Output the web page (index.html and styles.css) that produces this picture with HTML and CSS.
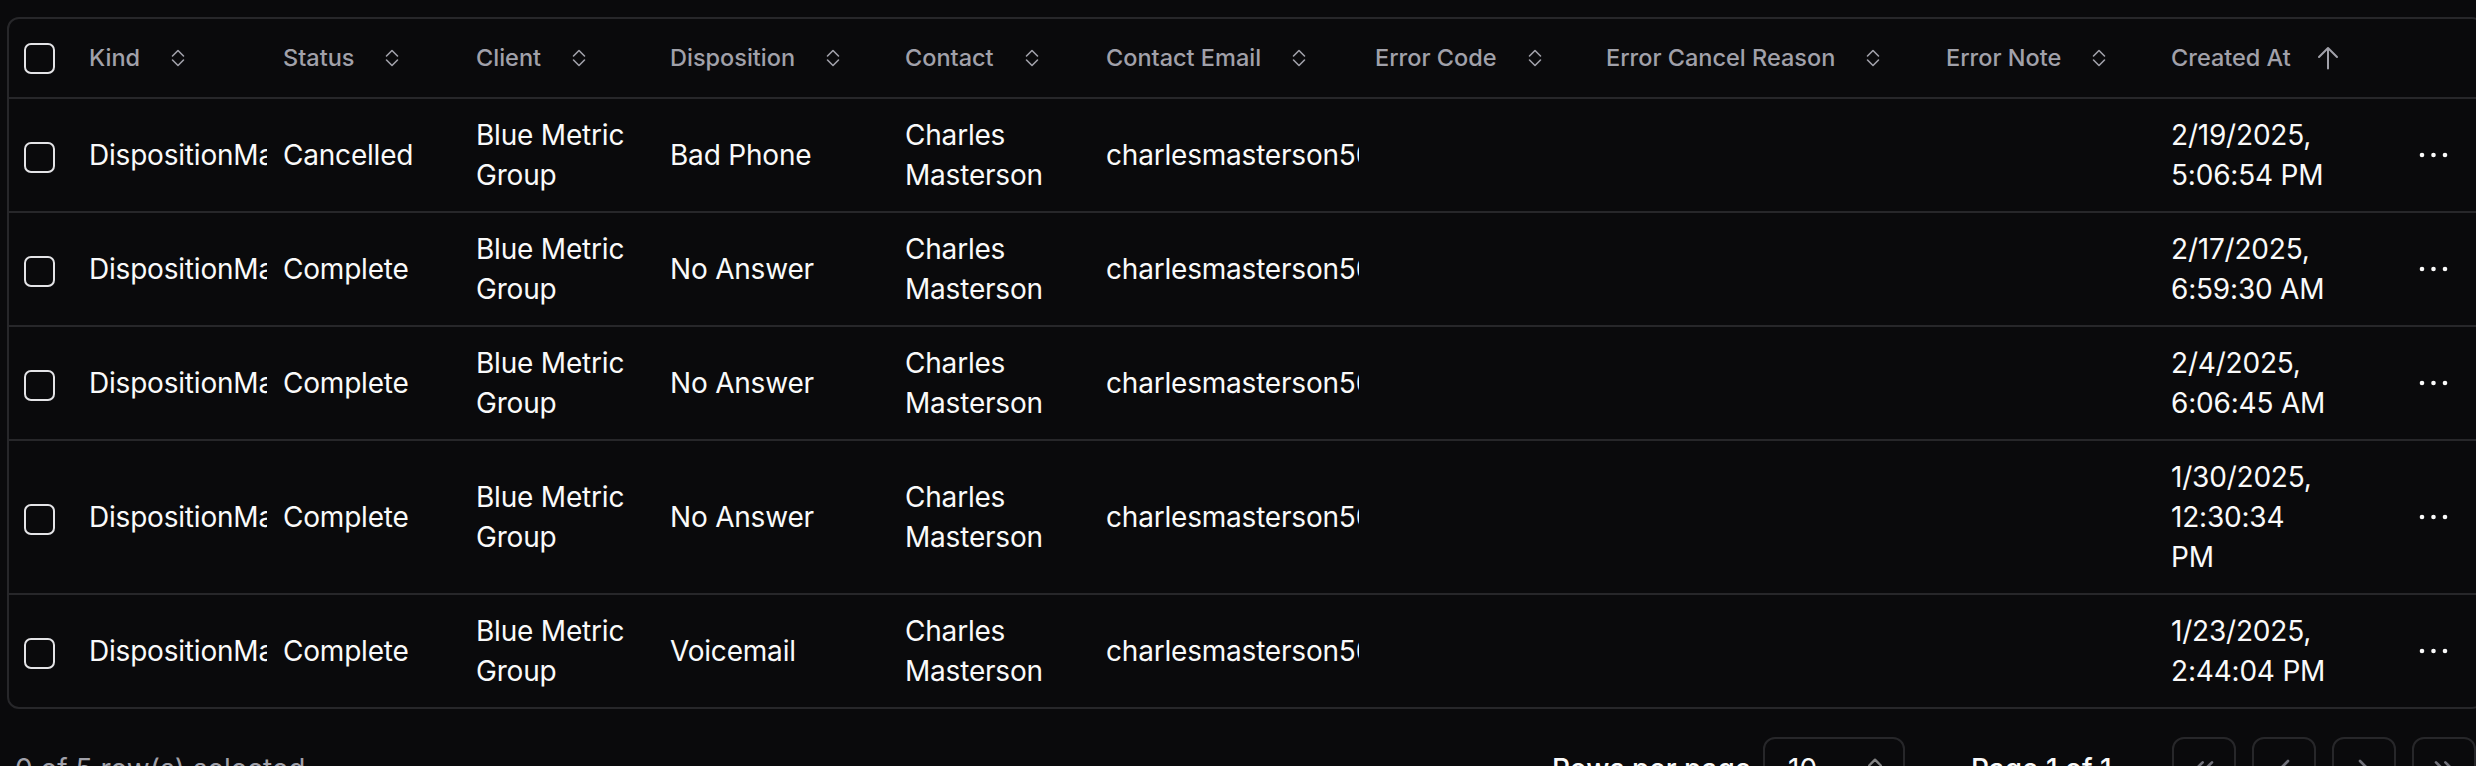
FILE: index.html
```html
<!DOCTYPE html>
<html lang="en">
<head>
<meta charset="utf-8">
<title>Dispositions</title>
<link rel="stylesheet" href="styles.css">
</head>
<body>
<svg class="defs" aria-hidden="true">
  <symbol id="i-sort" viewBox="0 0 14 18"><path d="M1.5 7 7 1.5 12.5 7M1.5 11 7 16.5 12.5 11" fill="none" stroke="currentColor" stroke-width="1.6" stroke-linecap="round" stroke-linejoin="round"/></symbol>
  <symbol id="i-up" viewBox="0 0 22 24"><path d="M11 22.5V2M2 11l9-9 9 9" fill="none" stroke="currentColor" stroke-width="2" stroke-linecap="round" stroke-linejoin="round"/></symbol>
  <symbol id="i-dots" viewBox="0 0 30 6"><circle cx="3" cy="3" r="2.3" fill="currentColor"/><circle cx="14.5" cy="3" r="2.3" fill="currentColor"/><circle cx="26" cy="3" r="2.3" fill="currentColor"/></symbol>
  <symbol id="i-first" viewBox="0 0 24 24"><path d="m11 17-5-5 5-5M18 17l-5-5 5-5" fill="none" stroke="currentColor" stroke-width="2" stroke-linecap="round" stroke-linejoin="round"/></symbol>
  <symbol id="i-prev" viewBox="0 0 24 24"><path d="m15 18-6-6 6-6" fill="none" stroke="currentColor" stroke-width="2" stroke-linecap="round" stroke-linejoin="round"/></symbol>
  <symbol id="i-next" viewBox="0 0 24 24"><path d="m9 18 6-6-6-6" fill="none" stroke="currentColor" stroke-width="2" stroke-linecap="round" stroke-linejoin="round"/></symbol>
  <symbol id="i-last" viewBox="0 0 24 24"><path d="m6 17 5-5-5-5M13 17l5-5-5-5" fill="none" stroke="currentColor" stroke-width="2" stroke-linecap="round" stroke-linejoin="round"/></symbol>
  <symbol id="i-updown" viewBox="0 0 24 24"><path d="m7 15 5 5 5-5M7 9l5-5 5 5" fill="none" stroke="currentColor" stroke-width="2" stroke-linecap="round" stroke-linejoin="round"/></symbol>
</svg>
<div class="page">
  <div class="card">
    <table class="grid">
      <colgroup>
        <col class="c-select"><col class="c-kind"><col class="c-status"><col class="c-client"><col class="c-disp"><col class="c-contact"><col class="c-email"><col class="c-code"><col class="c-reason"><col class="c-note"><col class="c-created"><col class="c-actions">
      </colgroup>
      <thead>
        <tr>
          <th class="select"><span class="checkbox"></span></th>
          <th><span class="head">Kind<svg class="sort"><use href="#i-sort"/></svg></span></th>
          <th><span class="head">Status<svg class="sort"><use href="#i-sort"/></svg></span></th>
          <th><span class="head">Client<svg class="sort"><use href="#i-sort"/></svg></span></th>
          <th><span class="head">Disposition<svg class="sort"><use href="#i-sort"/></svg></span></th>
          <th><span class="head">Contact<svg class="sort"><use href="#i-sort"/></svg></span></th>
          <th><span class="head">Contact Email<svg class="sort"><use href="#i-sort"/></svg></span></th>
          <th><span class="head">Error Code<svg class="sort"><use href="#i-sort"/></svg></span></th>
          <th><span class="head">Error Cancel Reason<svg class="sort"><use href="#i-sort"/></svg></span></th>
          <th><span class="head">Error Note<svg class="sort"><use href="#i-sort"/></svg></span></th>
          <th><span class="head">Created At<svg class="arrow"><use href="#i-up"/></svg></span></th>
          <th></th>
        </tr>
      </thead>
      <tbody>
        <tr>
          <td class="select"><span class="checkbox row-box"></span></td>
          <td class="clip">DispositionManual</td>
          <td>Cancelled</td>
          <td>Blue Metric Group</td>
          <td>Bad Phone</td>
          <td>Charles Masterson</td>
          <td class="clip">charlesmasterson50@gmail.com</td>
          <td></td><td></td><td></td>
          <td>2/19/2025, 5:06:54 PM</td>
          <td class="actions"><span class="row-action"><svg class="dots"><use href="#i-dots"/></svg></span></td>
        </tr>
        <tr>
          <td class="select"><span class="checkbox row-box"></span></td>
          <td class="clip">DispositionManual</td>
          <td>Complete</td>
          <td>Blue Metric Group</td>
          <td>No Answer</td>
          <td>Charles Masterson</td>
          <td class="clip">charlesmasterson50@gmail.com</td>
          <td></td><td></td><td></td>
          <td>2/17/2025, 6:59:30 AM</td>
          <td class="actions"><span class="row-action"><svg class="dots"><use href="#i-dots"/></svg></span></td>
        </tr>
        <tr>
          <td class="select"><span class="checkbox row-box"></span></td>
          <td class="clip">DispositionManual</td>
          <td>Complete</td>
          <td>Blue Metric Group</td>
          <td>No Answer</td>
          <td>Charles Masterson</td>
          <td class="clip">charlesmasterson50@gmail.com</td>
          <td></td><td></td><td></td>
          <td>2/4/2025, 6:06:45 AM</td>
          <td class="actions"><span class="row-action"><svg class="dots"><use href="#i-dots"/></svg></span></td>
        </tr>
        <tr>
          <td class="select"><span class="checkbox row-box"></span></td>
          <td class="clip">DispositionManual</td>
          <td>Complete</td>
          <td>Blue Metric Group</td>
          <td>No Answer</td>
          <td>Charles Masterson</td>
          <td class="clip">charlesmasterson50@gmail.com</td>
          <td></td><td></td><td></td>
          <td>1/30/2025, 12:30:34 PM</td>
          <td class="actions"><span class="row-action"><svg class="dots"><use href="#i-dots"/></svg></span></td>
        </tr>
        <tr class="last">
          <td class="select"><span class="checkbox row-box"></span></td>
          <td class="clip">DispositionManual</td>
          <td>Complete</td>
          <td>Blue Metric Group</td>
          <td>Voicemail</td>
          <td>Charles Masterson</td>
          <td class="clip">charlesmasterson50@gmail.com</td>
          <td></td><td></td><td></td>
          <td>1/23/2025, 2:44:04 PM</td>
          <td class="actions"><span class="row-action"><svg class="dots"><use href="#i-dots"/></svg></span></td>
        </tr>
      </tbody>
    </table>
  </div>
  <div class="footer">
    <div class="selected">0 of 5 row(s) selected.</div>
    <div class="controls">
      <div class="rows-label">Rows per page</div>
      <div class="select-box"><span>10</span><svg class="updown"><use href="#i-updown"/></svg></div>
      <div class="page-info">Page 1 of 1</div>
      <div class="pager">
        <span class="pbtn"><svg><use href="#i-first"/></svg></span>
        <span class="pbtn"><svg><use href="#i-prev"/></svg></span>
        <span class="pbtn"><svg><use href="#i-next"/></svg></span>
        <span class="pbtn"><svg><use href="#i-last"/></svg></span>
      </div>
    </div>
  </div>
</div>
</body>
</html>
```

FILE: styles.css
```css
html, body {
  margin: 0;
  background: #0a0a0c;
  overflow: hidden;
}
body {
  font-family: Inter, "Liberation Sans", sans-serif;
  color: #fafafa;
}
.defs {
  position: absolute;
  width: 0;
  height: 0;
  overflow: hidden;
}
.page {
  padding: 17px 0 0 7px;
  width: 2477px;
}
.card {
  border: 2px solid #27272a;
  border-radius: 12px;
  overflow: hidden;
}
.grid {
  width: 100%;
  table-layout: fixed;
  border-collapse: separate;
  border-spacing: 0;
}
.c-select { width: 64px; }
.c-kind { width: 194px; }
.c-status { width: 193px; }
.c-client { width: 194px; }
.c-disp { width: 235px; }
.c-contact { width: 201px; }
.c-email { width: 269px; }
.c-code { width: 231px; }
.c-reason { width: 340px; }
.c-note { width: 225px; }
.c-created { width: 190px; }
.c-actions { width: 137px; }

th {
  height: 78px;
  padding: 0 16px;
  text-align: left;
  vertical-align: middle;
  border-bottom: 2px solid #27272a;
  white-space: nowrap;
}
td {
  padding: 16px;
  font-size: 28px;
  line-height: 40px;
  letter-spacing: -0.2px;
  vertical-align: middle;
  border-bottom: 2px solid #27272a;
}
tr.last td {
  border-bottom: 0;
}
th.select, td.select {
  padding: 0 0 0 15px;
}
.checkbox {
  display: block;
  width: 31px;
  height: 31px;
  box-sizing: border-box;
  border: 2px solid #e4e4e7;
  border-radius: 7px;
}
.row-box {
  transform: translateY(2px);
}
.head {
  display: inline-flex;
  align-items: center;
  color: #a1a1aa;
  font-size: 23.5px;
  font-weight: 500;
  line-height: 32px;
}
.sort {
  width: 14px;
  height: 18px;
  margin-left: 31px;
}
.arrow {
  width: 22px;
  height: 24px;
  margin-left: 26px;
}
.clip {
  overflow: hidden;
  white-space: nowrap;
  text-overflow: clip;
}
td.actions {
  text-align: right;
  padding-top: 0;
  padding-bottom: 0;
}
.row-action {
  display: inline-flex;
  width: 64px;
  height: 64px;
  align-items: center;
  justify-content: center;
  vertical-align: middle;
}
.dots {
  width: 30px;
  height: 6px;
  color: #fafafa;
}
.footer {
  display: flex;
  justify-content: space-between;
  align-items: center;
  height: 64px;
  margin-top: 28px;
  padding: 0 8px;
  font-size: 28px;
  line-height: 40px;
}
.selected {
  color: #a1a1aa;
}
.controls {
  display: flex;
  align-items: center;
}
.rows-label {
  width: 211px;
  font-weight: 500;
  white-space: nowrap;
}
.select-box {
  display: flex;
  align-items: center;
  justify-content: space-between;
  box-sizing: border-box;
  width: 142px;
  height: 64px;
  padding: 0 14px 0 23px;
  border: 2px solid #27272a;
  border-radius: 12px;
}
.updown {
  width: 28px;
  height: 28px;
  color: #fafafa;
  opacity: 0.5;
}
.page-info {
  width: 137px;
  margin-left: 66px;
  font-weight: 500;
  white-space: nowrap;
}
.pager {
  display: flex;
  gap: 16px;
  margin-left: 64px;
}
.pbtn {
  display: flex;
  align-items: center;
  justify-content: center;
  box-sizing: border-box;
  width: 64px;
  height: 64px;
  border: 2px solid #27272a;
  border-radius: 12px;
  color: #71717a;
}
.pbtn svg {
  width: 32px;
  height: 32px;
}
```
